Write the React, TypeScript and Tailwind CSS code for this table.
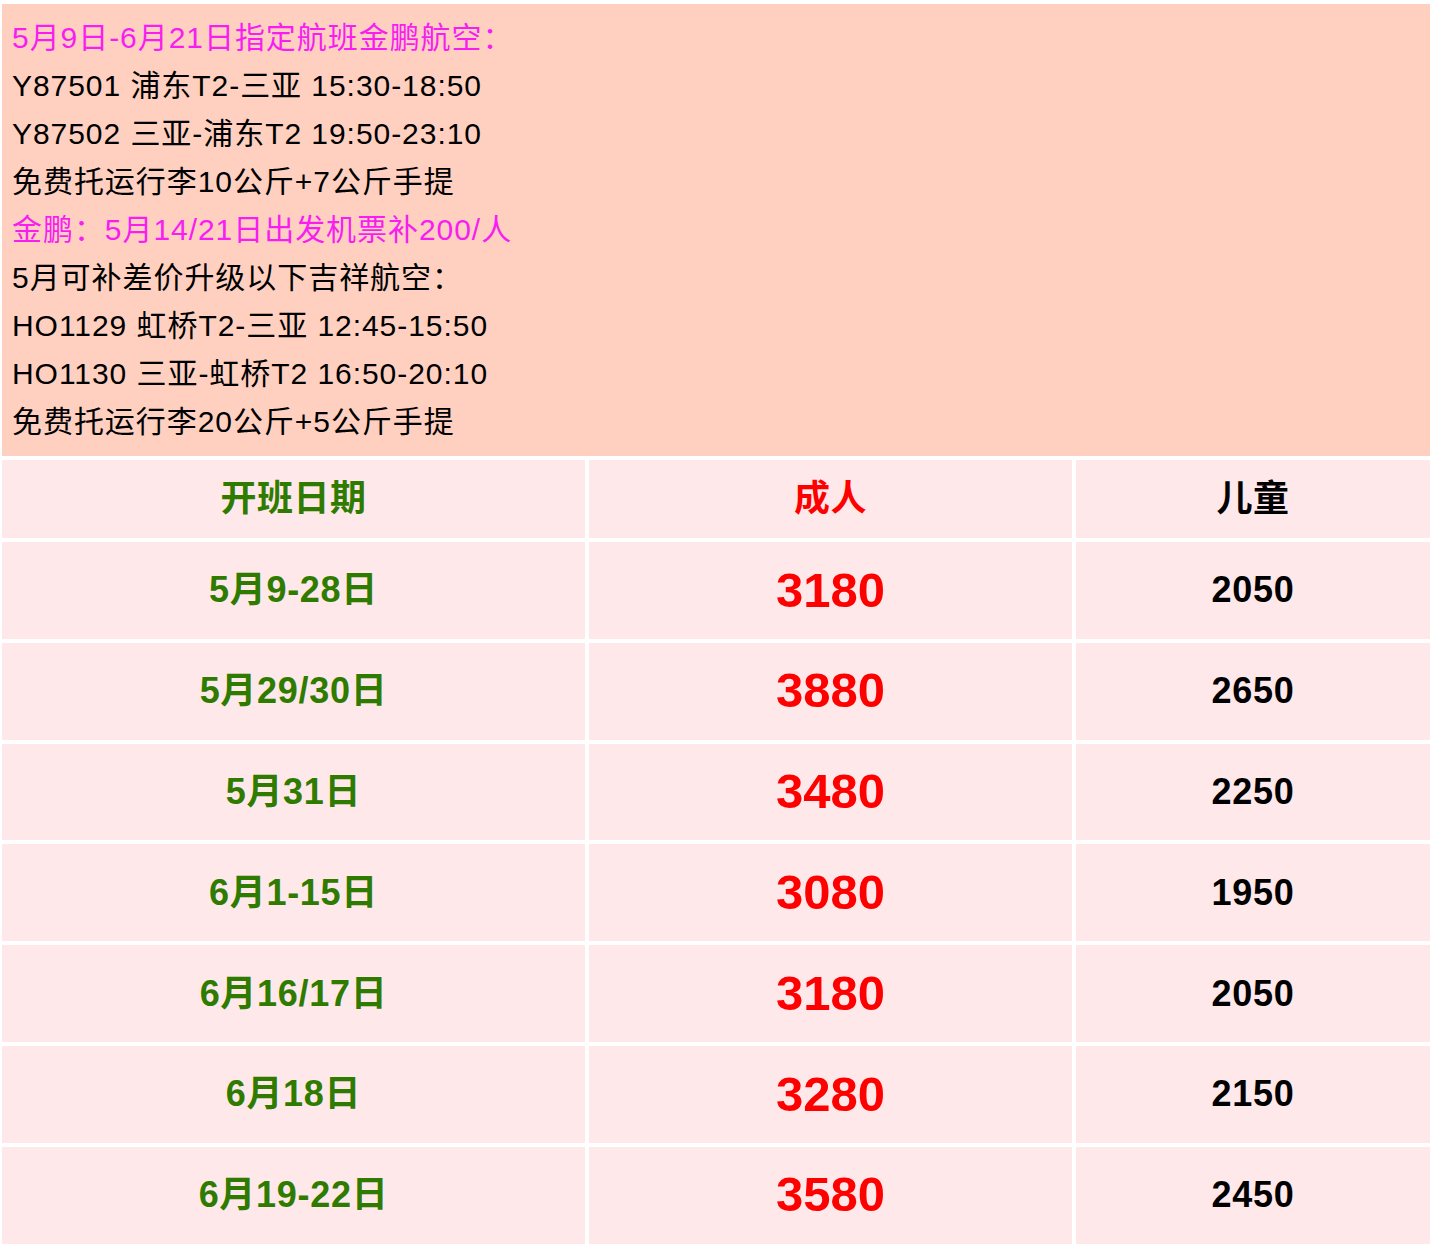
import React from "react";

const font = '"Liberation Sans", "Noto Sans CJK SC", sans-serif';

const rows: [string, string, string][] = [
  ["5月9-28日", "3180", "2050"],
  ["5月29/30日", "3880", "2650"],
  ["5月31日", "3480", "2250"],
  ["6月1-15日", "3080", "1950"],
  ["6月16/17日", "3180", "2050"],
  ["6月18日", "3280", "2150"],
  ["6月19-22日", "3580", "2450"],
];

const lines: { t: string; m?: boolean }[] = [
  { t: "5月9日-6月21日指定航班金鹏航空：", m: true },
  { t: "Y87501 浦东T2-三亚 15:30-18:50" },
  { t: "Y87502 三亚-浦东T2 19:50-23:10" },
  { t: "免费托运行李10公斤+7公斤手提" },
  { t: "金鹏：5月14/21日出发机票补200/人", m: true },
  { t: "5月可补差价升级以下吉祥航空：" },
  { t: "HO1129 虹桥T2-三亚 12:45-15:50" },
  { t: "HO1130 三亚-虹桥T2 16:50-20:10" },
  { t: "免费托运行李20公斤+5公斤手提" },
];

export default function App() {
  return (
    <div className="w-[1443px] min-h-[1259px] bg-white" style={{ fontFamily: font }}>
      <div className="ml-[2px] pt-[4px] w-[1428px] flex flex-col gap-[4px]">
        <div className="bg-[#ffd0c0] pl-[10px] pt-[10px] pb-[10px] h-[452px]">
          {lines.map((l, i) => (
            <div
              key={i}
              className={`text-[30px] leading-[48px] tracking-[0.95px] whitespace-nowrap ${l.m ? "text-[#f81ef0]" : "text-black"}`}
            >
              {l.t}
            </div>
          ))}
        </div>
        <div className="grid grid-cols-[583px_483px_354px] gap-[4px]">
          <div className="h-[78px] bg-[#ffe8ea] flex items-center justify-center text-[36px] font-bold tracking-[0.5px] text-[#2e7b00]">开班日期</div>
          <div className="h-[78px] bg-[#ffe8ea] flex items-center justify-center text-[36px] font-bold tracking-[0.5px] text-[#ff0000]">成人</div>
          <div className="h-[78px] bg-[#ffe8ea] flex items-center justify-center text-[36px] font-bold tracking-[0.5px] text-black">儿童</div>
          {rows.map((r, i) => (
            <React.Fragment key={i}>
              <div className="h-[96.8px] bg-[#ffe8ea] flex items-center justify-center text-[36px] font-bold tracking-[0.7px] text-[#2e7b00]">{r[0]}</div>
              <div className="h-[96.8px] bg-[#ffe8ea] flex items-center justify-center text-[49px] font-bold text-[#ff0000]">{r[1]}</div>
              <div className="h-[96.8px] bg-[#ffe8ea] flex items-center justify-center text-[36px] font-bold tracking-[0.7px] text-black">{r[2]}</div>
            </React.Fragment>
          ))}
        </div>
      </div>
    </div>
  );
}
